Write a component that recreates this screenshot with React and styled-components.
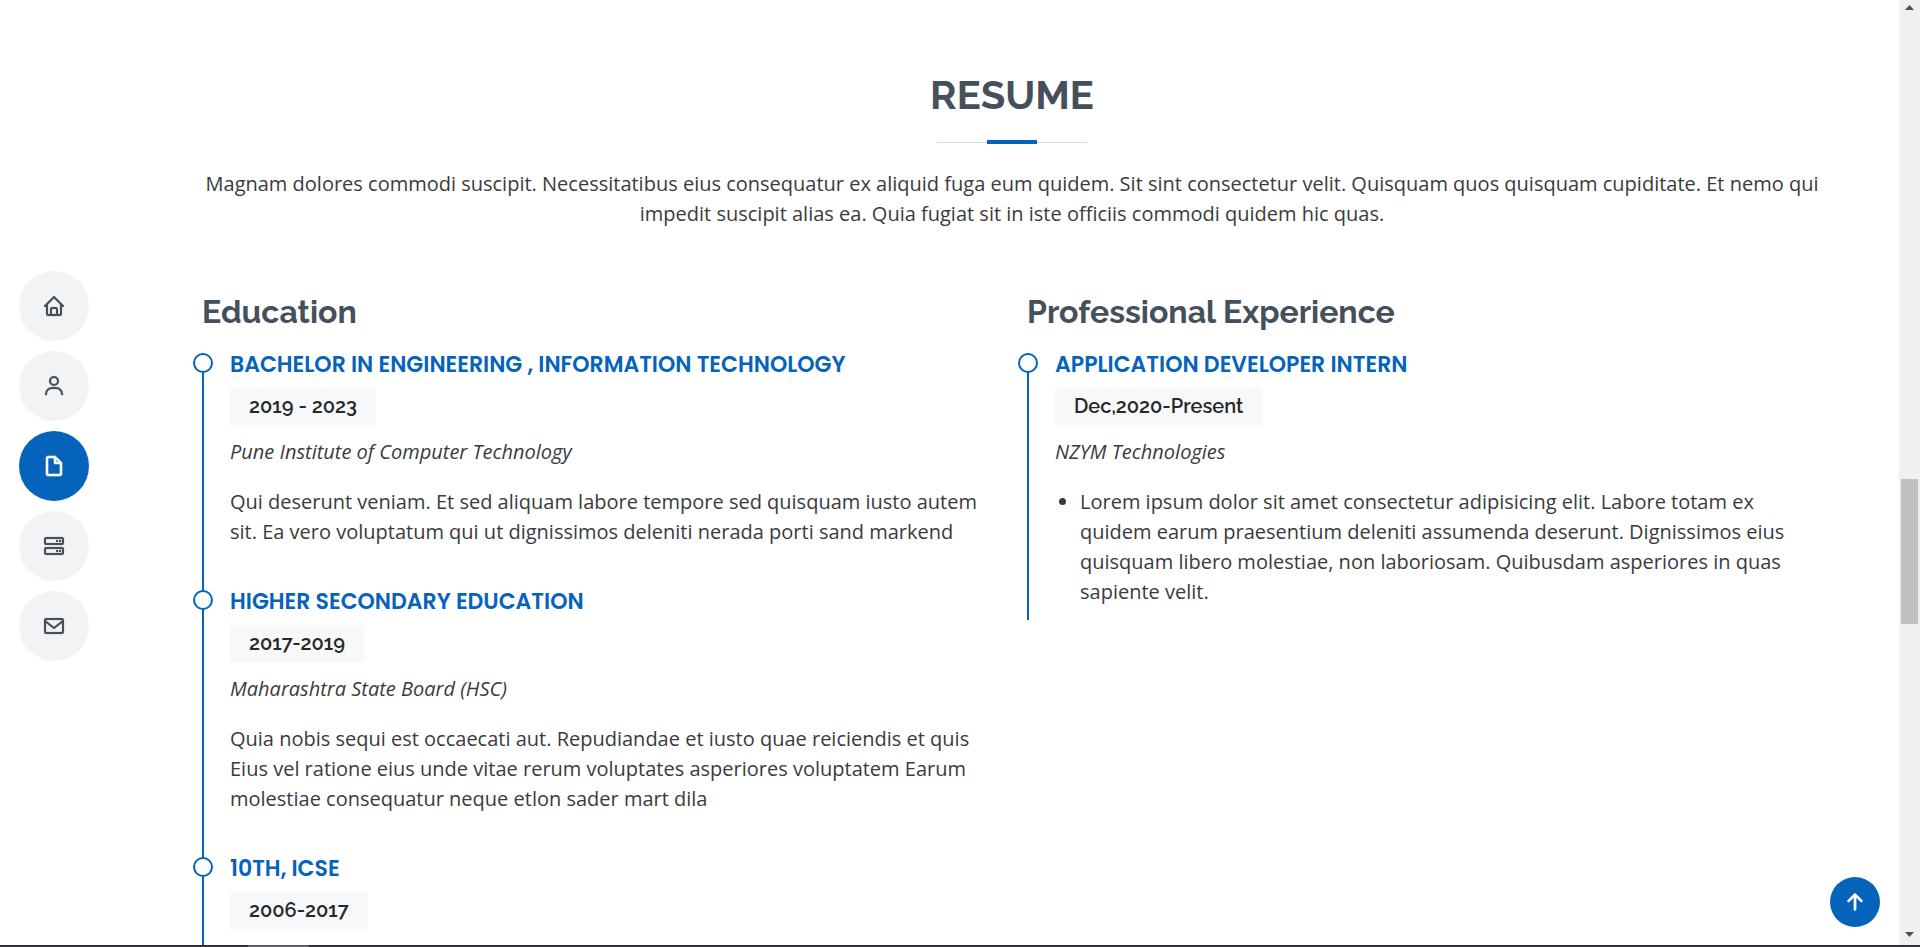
import React from "react";
import styled, { createGlobalStyle } from "styled-components";
import { BiHome, BiUser, BiFileBlank, BiServer, BiEnvelope } from "react-icons/bi";
import { BsArrowUpShort } from "react-icons/bs";

const blue = "#0563bb";
const slate = "#45505b";
const ink = "#272829";
const softInk = "#3a3b3c";
const headingFont = `Raleway, Lato, "Open Sans", sans-serif`;
const titleFont = `Poppins, Inter, sans-serif`;

const GlobalStyle = createGlobalStyle`
  *, *::before, *::after { box-sizing: border-box; }
  body {
    margin: 0;
    background: #fff;
    color: ${softInk};
    font-family: "Open Sans", sans-serif;
    font-size: 20px;
    line-height: 30px;
  }
`;

const Frame = styled.div`
  display: flex;
  flex-direction: column;
  height: 100vh;
  overflow: hidden;
`;

const Viewport = styled.div`
  position: relative;
  display: flex;
  flex: 1;
  min-height: 0;
`;

const Sidebar = styled.nav`
  display: flex;
  flex: none;
  flex-direction: column;
  justify-content: center;
  gap: 10px;
  width: 125px;
  padding: 0 0 13px 19px;
`;

const NavLink = styled.a`
  display: flex;
  align-items: center;
  justify-content: center;
  width: 70px;
  height: 70px;
  border-radius: 50%;
  color: ${({ $active }) => ($active ? "#fff" : slate)};
  background: ${({ $active }) => ($active ? blue : "#f2f3f5")};
  font-size: 24px;

  svg {
    stroke: currentColor;
    stroke-width: ${({ $active }) => ($active ? 0.6 : 0.2)};
  }
`;

const Main = styled.main`
  flex: 1;
  min-width: 0;
  overflow: hidden;
`;

const Container = styled.section`
  max-width: 1650px;
  margin: 0 auto;
  padding: 71px 15px 0;
`;

const SectionTitle = styled.header`
  display: flex;
  flex-direction: column;
  align-items: center;
  text-align: center;
  padding-bottom: 62px;
`;

const Heading = styled.h2`
  margin: 0 0 21px;
  color: ${slate};
  font: 700 40px/48px ${headingFont};
  text-transform: uppercase;
`;

const Rule = styled.div`
  display: flex;
  align-items: center;
  justify-content: center;
  width: 150px;
  height: 4px;
  margin-bottom: 25px;
  background: linear-gradient(#ddd, #ddd) 0 2px / 100% 1px no-repeat;

  &::after {
    content: "";
    width: 50px;
    height: 4px;
    background: ${blue};
  }
`;

const Text = styled.p`
  margin: 0;
`;

const Columns = styled.div`
  display: grid;
  grid-template-columns: 1fr 1fr;
  column-gap: 30px;
`;

const ColumnTitle = styled.h3`
  margin: 0;
  padding: 2px 0 22px;
  color: ${slate};
  font: 700 32px/38px ${headingFont};
`;

const Item = styled.article`
  position: relative;
  padding: 0 0 ${({ $last }) => ($last ? 13 : 43)}px 26px;
  border-left: 2px solid ${blue};

  &::before {
    content: "";
    position: absolute;
    top: 0;
    left: -11px;
    width: 20px;
    height: 20px;
    border: 2px solid ${blue};
    border-radius: 50%;
    background: #fff;
  }
`;

const ItemTitle = styled.h4`
  margin: 0 0 11px;
  color: ${blue};
  font: 600 22px/24px ${titleFont};
  text-transform: uppercase;
`;

const Period = styled.h5`
  width: fit-content;
  margin: 0 0 12px;
  padding: 6px 19px 7px;
  background: #f7f8f9;
  color: ${ink};
  font: 600 20px/24px ${headingFont};
`;

const Place = styled.p`
  margin: 0 0 20px;
  font-style: italic;
`;

const Duties = styled.ul`
  margin: 0;
  padding-left: 25px;
`;

const BackToTop = styled.a`
  position: absolute;
  right: 40px;
  bottom: 18px;
  display: flex;
  align-items: center;
  justify-content: center;
  width: 50px;
  height: 50px;
  border-radius: 50%;
  background: ${blue};
  color: #fff;
  font-size: 34px;

  svg {
    stroke: currentColor;
    stroke-width: 0.3;
  }
`;

const Scrollbar = styled.div`
  display: flex;
  flex: none;
  flex-direction: column;
  align-items: center;
  width: 21px;
  padding: 5px 0 8px;
  background: #f0f0f0;
`;

const Arrow = styled.svg`
  flex: none;
  width: 9px;
  height: 5px;
  fill: #505050;
`;

const Gap = styled.div`
  flex: ${({ $share }) => $share} 0 0;
`;

const Thumb = styled.div`
  flex: none;
  width: 17px;
  height: 145px;
  background: #c1c1c1;
`;

const Edge = styled.footer`
  flex: none;
  height: 2px;
  padding-left: 248px;
  background: #303236;

  &::before {
    content: "";
    display: block;
    width: 61px;
    height: 2px;
    background: #5c5d60;
  }
`;

const links = [
  { id: "home", label: "Home", icon: BiHome },
  { id: "about", label: "About", icon: BiUser },
  { id: "resume", label: "Resume", icon: BiFileBlank, active: true },
  { id: "services", label: "Services", icon: BiServer },
  { id: "contact", label: "Contact", icon: BiEnvelope },
];

const education = [
  {
    title: "Bachelor in Engineering , Information Technology",
    period: "2019 - 2023",
    place: "Pune Institute of Computer Technology",
    text: "Qui deserunt veniam. Et sed aliquam labore tempore sed quisquam iusto autem sit. Ea vero voluptatum qui ut dignissimos deleniti nerada porti sand markend",
  },
  {
    title: "Higher Secondary Education",
    period: "2017-2019",
    place: "Maharashtra State Board (HSC)",
    text: "Quia nobis sequi est occaecati aut. Repudiandae et iusto quae reiciendis et quis Eius vel ratione eius unde vitae rerum voluptates asperiores voluptatem Earum molestiae consequatur neque etlon sader mart dila",
  },
  { title: "10th, ICSE", period: "2006-2017" },
];

export default function App() {
  return (
    <>
      <GlobalStyle />
      <Frame>
        <Viewport>
          <Sidebar>
            {links.map(({ id, label, icon: Icon, active }) => (
              <NavLink key={id} href={`#${id}`} aria-label={label} $active={active}>
                <Icon />
              </NavLink>
            ))}
          </Sidebar>
          <Main>
            <Container id="resume">
              <SectionTitle>
                <Heading>Resume</Heading>
                <Rule />
                <Text>
                  Magnam dolores commodi suscipit. Necessitatibus eius consequatur ex aliquid fuga eum
                  quidem. Sit sint consectetur velit. Quisquam quos quisquam cupiditate. Et nemo qui
                  impedit suscipit alias ea. Quia fugiat sit in iste officiis commodi quidem hic quas.
                </Text>
              </SectionTitle>
              <Columns>
                <div>
                  <ColumnTitle>Education</ColumnTitle>
                  {education.map(({ title, period, place, text }) => (
                    <Item key={title}>
                      <ItemTitle>{title}</ItemTitle>
                      <Period>{period}</Period>
                      {place && <Place>{place}</Place>}
                      {text && <Text>{text}</Text>}
                    </Item>
                  ))}
                </div>
                <div>
                  <ColumnTitle>Professional Experience</ColumnTitle>
                  <Item $last>
                    <ItemTitle>Application Developer Intern</ItemTitle>
                    <Period>Dec,2020-Present</Period>
                    <Place>NZYM Technologies</Place>
                    <Duties>
                      <li>
                        Lorem ipsum dolor sit amet consectetur adipisicing elit. Labore totam ex quidem
                        earum praesentium deleniti assumenda deserunt. Dignissimos eius quisquam libero
                        molestiae, non laboriosam. Quibusdam asperiores in quas sapiente velit.
                      </li>
                    </Duties>
                  </Item>
                </div>
              </Columns>
            </Container>
          </Main>
          <Scrollbar aria-hidden="true">
            <Arrow viewBox="0 0 9 5"><path d="M4.5 0 9 5H0z" /></Arrow>
            <Gap $share={469} />
            <Thumb />
            <Gap $share={308} />
            <Arrow viewBox="0 0 9 5"><path d="M4.5 5 9 0H0z" /></Arrow>
          </Scrollbar>
          <BackToTop href="#home" aria-label="Back to top">
            <BsArrowUpShort />
          </BackToTop>
        </Viewport>
        <Edge />
      </Frame>
    </>
  );
}
